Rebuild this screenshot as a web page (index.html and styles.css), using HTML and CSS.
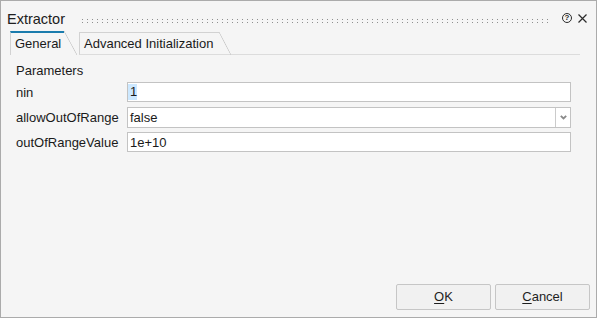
FILE: index.html
```html
<!DOCTYPE html>
<html>
<head>
<meta charset="utf-8">
<link rel="stylesheet" href="styles.css">
</head>
<body>
<div class="window">
  <div class="titlebar">
    <span class="title">Extractor</span>
    <div class="grip"></div>
    <span class="help">?</span>
    <svg class="close" width="9" height="9" viewBox="0 0 9 9"><path d="M0.5 0.5 L8.5 8.5 M8.5 0.5 L0.5 8.5" stroke="#2b2b2b" stroke-width="1.2" fill="none"/></svg>
  </div>
  <div class="tabs">
    <div class="tab active">General</div>
    <div class="tab inactive">Advanced Initialization</div>
    <div class="tab-fill"></div>
  </div>
  <div class="panel">
    <div class="group-title">Parameters</div>
    <div class="form">
      <div class="label">nin</div>
      <div class="field"><span class="sel">1</span></div>
      <div class="label">allowOutOfRange</div>
      <div class="field combo"><span class="value">false</span><span class="drop"><svg width="7" height="5" viewBox="0 0 7 5"><path d="M0.8 0.8 L3.5 3.5 L6.2 0.8" stroke="#8a8a8a" stroke-width="1.8" fill="none"/></svg></span></div>
      <div class="label">outOfRangeValue</div>
      <div class="field"><span class="value">1e+10</span></div>
    </div>
  </div>
  <div class="footer">
    <button class="btn"><u>O</u>K</button>
    <button class="btn"><u>C</u>ancel</button>
  </div>
</div>
</body>
</html>
```
FILE: styles.css
```css
html, body {
  margin: 0;
  padding: 0;
}
body {
  width: 597px;
  height: 318px;
  overflow: hidden;
  font-family: "Liberation Sans", Arial, sans-serif;
  font-size: 13px;
  color: #1a1a1a;
}
.window {
  box-sizing: border-box;
  width: 597px;
  height: 318px;
  border: 1px solid #ababab;
  background: #f5f5f5;
  display: flex;
  flex-direction: column;
}
.titlebar {
  height: 30px;
  display: flex;
  align-items: flex-start;
  padding-left: 6px;
  flex: none;
}
.title {
  font-size: 14.5px;
  line-height: 17px;
  margin-top: 10px;
  color: #202020;
}
.grip {
  flex: 1;
  height: 4px;
  margin: 18px 0 0 17px;
  background-image: linear-gradient(90deg, #8f8f8f 1px, transparent 1px), linear-gradient(90deg, #8f8f8f 1px, transparent 1px);
  background-size: 5px 1px;
  background-position: 0 0, 0 3px;
  background-repeat: repeat-x;
}
.help {
  box-sizing: border-box;
  width: 10px;
  height: 10px;
  margin: 12px 0 0 14px;
  border: 1.3px solid #2b2b2b;
  border-radius: 50%;
  font-size: 8px;
  font-weight: bold;
  line-height: 8px;
  text-align: center;
  color: #2b2b2b;
}
.close {
  margin: 13px 9px 0 6px;
  display: block;
}
.tabs {
  display: flex;
  height: 24px;
  padding-left: 9px;
  flex: none;
}
.tab {
  position: relative;
  box-sizing: border-box;
  line-height: 15px;
  padding: 3px 0 0 4px;
  white-space: nowrap;
}
.tab::after {
  content: "";
  position: absolute;
  left: 100%;
  background: linear-gradient(to top right, transparent calc(50% - 0.7px), #c9c9c9 50%, transparent calc(50% + 0.7px));
}
.tab.active {
  width: 54px;
  height: 24px;
  border-left: 1px solid #d2d2d2;
  border-top: 2px solid #1b7cad;
}
.tab.active::after {
  top: -2px;
  width: 13px;
  height: 24px;
}
.tab.inactive {
  width: 140px;
  height: 23px;
  margin: 1px 0 0 15px;
  border-left: 1px solid #d2d2d2;
  border-top: 1px solid #d2d2d2;
  border-bottom: 1px solid #dcdcdc;
}
.tab.inactive::after {
  top: -1px;
  width: 12px;
  height: 23px;
}
.tab-fill {
  flex: 1;
  margin-right: 16px;
  border-bottom: 1px solid #dcdcdc;
}
.panel {
  flex: 1;
  padding: 8px 25px 0 15px;
}
.group-title {
  line-height: 15px;
  margin-bottom: 4px;
}
.form {
  display: grid;
  grid-template-columns: 111px 1fr;
  row-gap: 5px;
  align-items: center;
}
.label {
  line-height: 15px;
}
.field {
  box-sizing: border-box;
  height: 20px;
  border: 1px solid #c3c3c3;
  background: #ffffff;
  padding-left: 2px;
  display: flex;
  align-items: center;
  line-height: 15px;
}
.field.combo {
  height: 21px;
  margin-bottom: -1px;
}
.value {
  flex: 1;
}
.sel {
  display: inline-block;
  background: #cce8ff;
  line-height: 16px;
  margin-left: -2px;
  padding-left: 2px;
}
.drop {
  align-self: stretch;
  width: 14px;
  border-left: 1px solid #cbcbcb;
  display: flex;
  align-items: center;
  justify-content: center;
}
.drop svg {
  display: block;
}
.footer {
  display: flex;
  justify-content: flex-end;
  gap: 4px;
  padding: 0 6px 7px 0;
  flex: none;
}
.btn {
  box-sizing: border-box;
  width: 95px;
  height: 26px;
  border: 1px solid #c6c6c6;
  border-radius: 2px;
  background: #f1f1f1;
  font-family: "Liberation Sans", Arial, sans-serif;
  font-size: 13px;
  line-height: 15px;
  color: #1e1e1e;
  padding: 0 0 2px 0;
  margin: 0;
}
.btn u {
  text-underline-offset: 2px;
}
```
